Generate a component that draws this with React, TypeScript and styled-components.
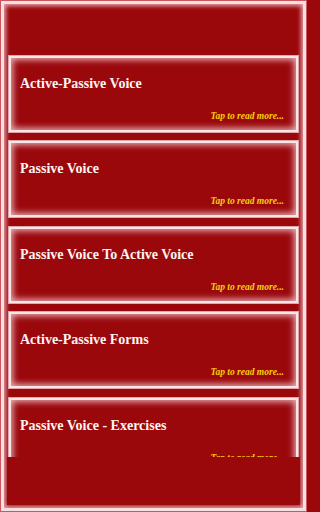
import React from "react";
import styled, { createGlobalStyle } from "styled-components";

const Global = createGlobalStyle`
  html, body { margin: 0; padding: 0; background: #9a080c; }
  body { overflow: hidden; }
  * { box-sizing: border-box; }
`;

const Frame = styled.div`
  width: 307px;
  height: 512px;
  padding: 7px;
  background: #9a080c;
  display: flex;
  flex-direction: column;
  box-shadow:
    inset 0 0 0 1px #c8575f,
    inset 0 0 0 4px #f5dfe1,
    inset 0 0 4px 6px #e3a2a8;
`;

const Header = styled.div`
  height: 47.5px;
  flex: none;
`;

const List = styled.div`
  flex: 1;
  overflow: hidden;
  display: flex;
  flex-direction: column;
  gap: 7.5px;
  padding: 0 1px;
`;

const Card = styled.div`
  flex: none;
  height: 78px;
  background: #9a080c;
  display: flex;
  flex-direction: column;
  justify-content: space-between;
  padding: 22px 15px 12px 12px;
  box-shadow:
    inset 0 0 0 1px #e0a6ab,
    inset 0 0 0 3px #f8e6e7,
    inset 0 0 6px 5px #e7aab0;
`;

const Title = styled.div`
  font-family: "Liberation Serif", serif;
  font-weight: 700;
  font-size: 14px;
  line-height: 14px;
  color: #fdf4f0;
`;

const Tap = styled.div`
  align-self: flex-end;
  font-family: "Liberation Serif", serif;
  font-style: italic;
  font-weight: 700;
  font-size: 9.5px;
  line-height: 10px;
  color: #f3d10a;
`;

const Footer = styled.div`
  height: 48px;
  flex: none;
  background: #9a080c;
`;

const items = [
  "Active-Passive Voice",
  "Passive Voice",
  "Passive Voice To Active Voice",
  "Active-Passive Forms",
  "Passive Voice - Exercises",
];

export default function App() {
  return (
    <>
      <Global />
      <Frame>
        <Header />
        <List>
          {items.map((t) => (
            <Card key={t}>
              <Title>{t}</Title>
              <Tap>Tap to read more...</Tap>
            </Card>
          ))}
        </List>
        <Footer />
      </Frame>
    </>
  );
}
